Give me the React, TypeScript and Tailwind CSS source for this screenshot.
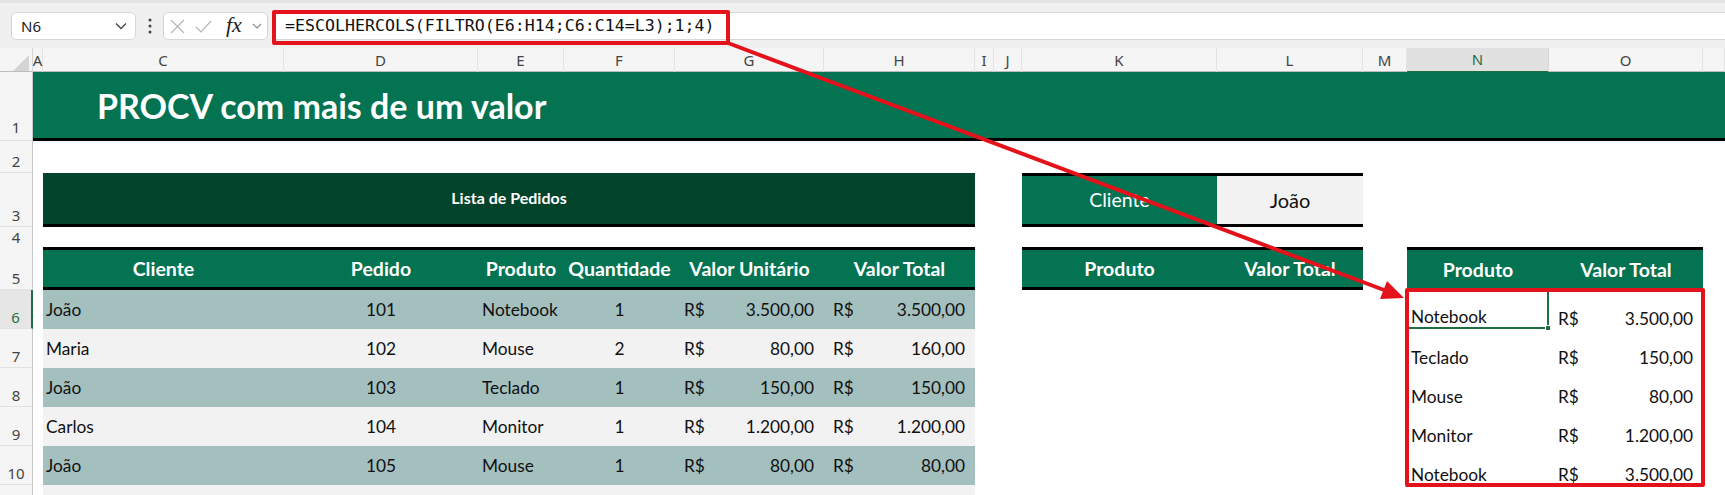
import React from 'react'

const COLS =
  'grid grid-cols-[33px_10px_241px_194px_86px_111px_149px_151px_19px_28px_195px_146px_44px_142px_154px_1fr]'

const LETTERS = ['A', 'C', 'D', 'E', 'F', 'G', 'H', 'I', 'J', 'K', 'L', 'M', 'N', 'O', '']

const pedidos = [
  ['João', '101', 'Notebook', '1', '3.500,00', '3.500,00'],
  ['Maria', '102', 'Mouse', '2', '80,00', '160,00'],
  ['João', '103', 'Teclado', '1', '150,00', '150,00'],
  ['Carlos', '104', 'Monitor', '1', '1.200,00', '1.200,00'],
  ['João', '105', 'Mouse', '1', '80,00', '80,00'],
]

const resultado = [
  ['Notebook', '3.500,00'],
  ['Teclado', '150,00'],
  ['Mouse', '80,00'],
  ['Monitor', '1.200,00'],
  ['Notebook', '3.500,00'],
]

function RowNum({ n, active, pb = 'pb-[1px]' }: { n?: number; active?: boolean; pb?: string }) {
  return (
    <div
      className={`flex items-end justify-center ${pb} border-b border-[#e1e1e1] font-['Noto_Sans',sans-serif] text-[15px] leading-[20px] ${
        active
          ? 'bg-[#e6e6e6] text-[#1e6e43] border-r-2 border-r-[#1e6e43]'
          : 'bg-[#f5f5f5] text-[#444] border-r border-r-[#c8c8c8]'
      }`}
    >
      {n}
    </div>
  )
}

function Money({ v, bg }: { v: string; bg: string }) {
  return (
    <div className={`flex items-center justify-between pl-[9px] pr-[10px] ${bg}`}>
      <span>R$</span>
      <span>{v}</span>
    </div>
  )
}

function Toolbar() {
  return (
    <div className="h-[48px] bg-[#f0f0f0] border-t-[3px] border-[#e4e4e4] pt-[9px]">
      <div className="flex items-center h-[28px] font-['Noto_Sans',sans-serif]">
        <div className="ml-[11px] w-[125px] h-full bg-white rounded-[5px] border border-[#d6d6d6] flex items-center justify-between pl-[9px] pr-[8px] text-[15px] text-[#222]">
          <span>N6</span>
          <svg width="12" height="8" viewBox="0 0 12 8">
            <path d="M1 1.5 L6 6.5 L11 1.5" fill="none" stroke="#444" strokeWidth="1.3" />
          </svg>
        </div>
        <div className="w-[27px] flex justify-center">
          <svg width="4" height="16" viewBox="0 0 4 16">
            <circle cx="2" cy="2" r="1.5" fill="#444" />
            <circle cx="2" cy="8" r="1.5" fill="#444" />
            <circle cx="2" cy="14" r="1.5" fill="#444" />
          </svg>
        </div>
        <div className="w-[105px] h-full bg-white rounded-[5px] border border-[#d6d6d6] flex items-center pl-[6px] gap-[10px]">
          <svg width="15" height="15" viewBox="0 0 15 15">
            <path d="M1 1 L14 14 M14 1 L1 14" stroke="#b5b5b5" strokeWidth="1.2" />
          </svg>
          <svg width="17" height="13" viewBox="0 0 17 13">
            <path d="M1 7 L6 12 L16 1" fill="none" stroke="#b5b5b5" strokeWidth="1.2" />
          </svg>
          <span className="font-['Liberation_Serif',serif] italic text-[22px] leading-none text-[#222] ml-[4px] -mt-[3px]">
            fx
          </span>
          <svg width="10" height="6" viewBox="0 0 10 6">
            <path d="M1 1 L5 5 L9 1" fill="none" stroke="#888" strokeWidth="1.1" />
          </svg>
        </div>
        <div className="flex-1 ml-[4px] h-full bg-white border-y border-[#d6d6d6] flex items-center pl-[13px] font-['DejaVu_Sans_Mono',monospace] text-[16.6px] text-[#111]">
          =ESCOLHERCOLS(FILTRO(E6:H14;C6:C14=L3);1;4)
        </div>
      </div>
    </div>
  )
}

function ColHeaders() {
  return (
    <div className={`${COLS} h-[24px] bg-[#f5f5f5] border-b border-[#bdbdbd] font-['Noto_Sans',sans-serif] text-[15px] text-[#444]`}>
      <div className="relative border-r border-[#d6d6d6]">
        <svg className="absolute right-[3px] bottom-[2px]" width="16" height="16" viewBox="0 0 16 16">
          <path d="M0 16 L16 16 L16 0 Z" fill="#d4d4d4" />
        </svg>
      </div>
      {LETTERS.map((l, i) =>
        l === 'N' ? (
          <div
            key={i}
            className="flex items-center justify-center bg-[#e1e1e1] text-[#1e6e43] border-b-2 border-[#1e6e43] border-r border-r-[#d6d6d6]"
          >
            {l}
          </div>
        ) : (
          <div key={i} className="flex items-center justify-center border-r border-[#e3e3e3] leading-none">
            {l}
          </div>
        )
      )}
    </div>
  )
}

export default function App() {
  const green = 'bg-[#037352]'
  const cell = "font-['Lato',sans-serif] text-[17.3px] text-[#111]"
  const head = 'flex items-center justify-center text-white font-bold text-[19.5px]'

  return (
    <div className="relative w-[1725px] h-[495px] overflow-hidden bg-white">
      <Toolbar />
      <ColHeaders />

      {/* linha 1 */}
      <div className={`${COLS} h-[69px]`}>
        <RowNum n={1} pb="pb-[3px]" />
        <div className={`col-span-15 ${green} border-b-[3px] border-black flex items-center pl-[64px]`}>
          <span className="font-['Lato',sans-serif] font-bold text-[34px] text-white">PROCV com mais de um valor</span>
        </div>
      </div>

      {/* linha 2 */}
      <div className={`${COLS} h-[32px]`}>
        <RowNum n={2} />
        <div className="col-span-15" />
      </div>

      {/* linha 3 */}
      <div className={`${COLS} h-[54px] ${cell}`}>
        <RowNum n={3} />
        <div />
        <div className="col-span-6 bg-[#02432c] border-b-[3px] border-black flex items-center justify-center pb-[1px] text-white font-bold text-[16px]">
          Lista de Pedidos
        </div>
        <div className="col-span-2" />
        <div className={`${green} border-y-[3px] border-black flex items-center justify-center text-white text-[19.5px]`}>
          Cliente
        </div>
        <div className="bg-[#f2f2f2] border-y-[3px] border-black flex items-center justify-center text-[20px]">João</div>
        <div className="col-span-4" />
      </div>

      {/* linha 4 */}
      <div className={`${COLS} h-[20px]`}>
        <RowNum n={4} />
        <div className="col-span-15" />
      </div>

      {/* linha 5 */}
      <div className={`${COLS} h-[43px] ${cell}`}>
        <RowNum n={5} />
        <div />
        {['Cliente', 'Pedido', 'Produto', 'Quantidade', 'Valor Unitário', 'Valor Total'].map((h) => (
          <div key={h} className={`${head} ${green} border-y-[3px] border-black`}>
            {h}
          </div>
        ))}
        <div className="col-span-2" />
        <div className={`${head} ${green} border-y-[3px] border-black`}>Produto</div>
        <div className={`${head} ${green} border-y-[3px] border-black`}>Valor Total</div>
        <div />
        <div className={`${head} ${green} border-t-[3px] border-black`}>Produto</div>
        <div className={`${head} ${green} border-t-[3px] border-black`}>Valor Total</div>
        <div />
      </div>

      {/* linhas 6-10 */}
      {pedidos.map((p, i) => {
        const bg = i % 2 === 0 ? 'bg-[#a3bfbe]' : 'bg-[#f2f2f2]'
        const r = resultado[i]
        return (
          <div key={i} className={`${COLS} h-[39px] ${cell}`}>
            <RowNum n={6 + i} active={i === 0} />
            <div />
            <div className={`flex items-center pl-[3px] ${bg}`}>{p[0]}</div>
            <div className={`flex items-center justify-center ${bg}`}>{p[1]}</div>
            <div className={`flex items-center pl-[4px] ${bg}`}>{p[2]}</div>
            <div className={`flex items-center justify-center ${bg}`}>{p[3]}</div>
            <Money v={p[4]} bg={bg} />
            <Money v={p[5]} bg={bg} />
            <div className="col-span-5" />
            <div
              className={`relative flex items-end pl-[4px] leading-[21px] ${
                i === 0 ? 'border-b-2 border-r-2 border-[#1e6e43]' : ''
              }`}
            >
              {r[0]}
              {i === 0 && <div className="absolute -right-[4px] -bottom-[4px] w-[6px] h-[6px] bg-[#1e6e43] border border-white" />}
            </div>
            <div className="flex items-end justify-between pl-[9px] pr-[10px] leading-[21px]">
              <span>R$</span>
              <span>{r[1]}</span>
            </div>
            <div />
          </div>
        )
      })}

      {/* linha 11 */}
      <div className={`${COLS} h-[30px]`}>
        <RowNum />
        <div />
        <div className="col-span-6 bg-[#f2f2f2]" />
        <div className="col-span-8" />
      </div>

      {/* destaques em vermelho */}
      <div className="absolute left-[272px] top-[10px] w-[458px] h-[35px] border-[4px] border-[#e4131b] rounded-[2px]" />
      <div className="absolute left-[1405px] top-[288px] w-[300px] h-[199px] border-[4px] border-[#e4131b] rounded-[2px]" />
      <svg className="absolute inset-0 pointer-events-none" width="1725" height="495">
        <line x1="728" y1="43" x2="1384" y2="290" stroke="#e4131b" strokeWidth="4" />
        <polygon points="1404,298 1380,299 1387,281" fill="#e4131b" />
      </svg>
    </div>
  )
}
